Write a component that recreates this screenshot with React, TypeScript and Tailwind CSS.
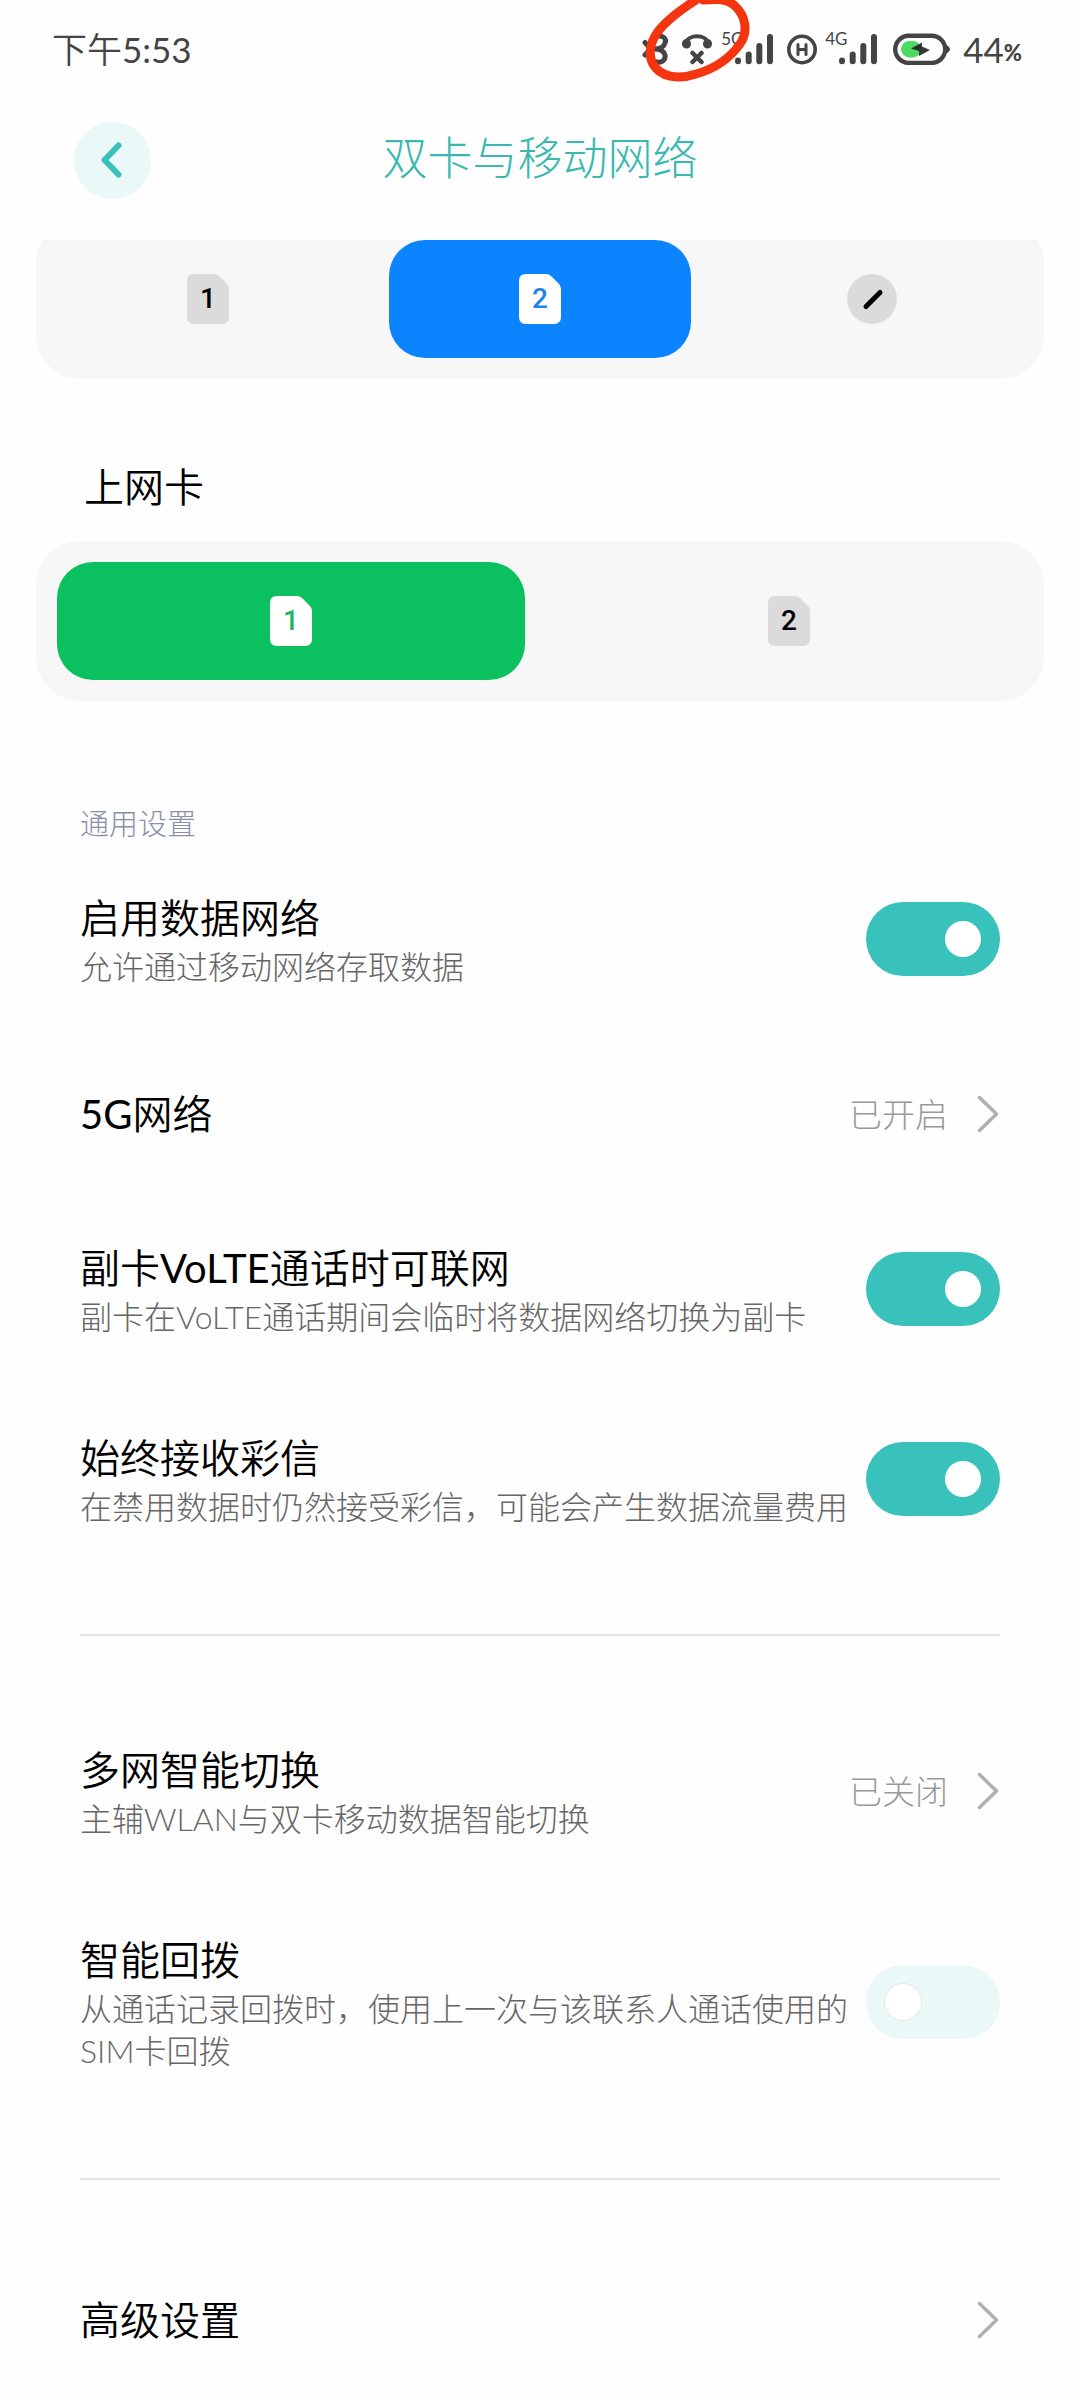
// Import React and the hook for the interactive controls.
import React, { useState } from 'react';
import { clsx } from 'clsx';

// One option inside a segmented selector.
interface Segment {
  id: string;
  label: string;
  icon: React.ReactNode;
}

interface SegmentedProps {
  name: string;
  segments: Segment[];
  value: string;
  onChange: (id: string) => void;
  columns: string;      // Grid columns class.
  activeClass: string;  // Background colour of the selected segment.
}

interface RowProps {
  id: string;
  title: string;
  description?: string;
}

// Slightly heavier than the light body text, used for titles and the clock.
const titleFont = "font-['Lato','Noto_Sans_CJK_SC_DemiLight','Noto_Sans_CJK_SC',sans-serif]";

// Four bars with the network type in the corner.
const Signal: React.FC<{ type: string; className?: string }> = ({ type, className }) => (
  <div className={clsx('relative flex h-8 w-[52px] justify-end', className)}>
    <span className="absolute top-0 left-0 text-[17px] leading-[12px]">{type}</span>
    <svg className="h-8 w-[38px]" viewBox="0 0 38 32" fill="none" stroke="currentColor" strokeWidth="6" strokeLinecap="round">
      <path d="M3 27.5v.8M13.7 21.5v6.8M24.3 13v15.3M35 4v24.3" />
    </svg>
  </div>
);

// The bar at the very top of the phone.
const StatusBar: React.FC = () => (
  <div className="flex h-[98px] items-center justify-between pr-[58px] pl-[52px] text-[#444]">
    <span className={clsx('text-[35px] leading-[40px]', titleFont)}>下午5:53</span>

    <div className="relative flex items-center">
      {/* BLUETOOTH */}
      <svg className="mr-[14px] h-8 w-[26px]" viewBox="0 0 26 32" fill="none" stroke="currentColor" strokeWidth="5" strokeLinecap="round" strokeLinejoin="round">
        <path d="M3 9.500l5 5.500M3 22l5-5.500M12 4c8-3 13 1 11 6-1 4-5 6-11 6 6 0 10 2 11 6 1 6-5 9-11 6" />
      </svg>

      {/* CALL UNAVAILABLE */}
      <svg className="mr-[9px] h-8 w-[30px]" viewBox="0 0 30 32" fill="none" stroke="currentColor" strokeLinecap="round">
        <path d="M4 10C6 1 24 1 26 10" strokeWidth="4" />
        <path d="M4.500 10.500v.5M25.500 10.500v.5" strokeWidth="9" />
        <path d="M10.500 20l9 9M19.500 20l-9 9" strokeWidth="4.500" />
      </svg>

      <Signal type="5G" className="mr-[14px]" />

      {/* HD VOICE */}
      <svg className="mr-2 h-8 w-[30px]" viewBox="0 0 30 32" fill="none" stroke="currentColor" strokeLinecap="round">
        <circle cx="15" cy="16.500" r="13.200" strokeWidth="3.600" />
        <path d="M11 11.500v10M19 11.500v10M11 16.500h8" strokeWidth="3" />
      </svg>

      <Signal type="4G" className="mr-4" />

      {/* BATTERY */}
      <svg className="mr-3 h-8 w-[58px]" viewBox="0 0 58 32">
        <path d="M52 11.500q5 2 5 4.800t-5 4.800z" fill="#444" />
        <rect x="2.200" y="2.700" width="50" height="27.200" rx="13.600" fill="none" stroke="#444" strokeWidth="4.400" />
        <rect x="8" y="8" width="20" height="16.500" rx="8.200" fill="#4cd964" />
        <path d="M18 15.500 29 9.500v4l8 3.500-11 6v-5z" fill="#222" fillOpacity="0.9" />
      </svg>

      <span className="text-[35px] leading-[40px]">44</span>
      <span className="pt-2 text-[22px] leading-[32px] font-black">%</span>

      {/* HAND-DRAWN RING around the call icon. */}
      <svg className="absolute -top-[28px] left-0 h-[84px] w-[110px] overflow-visible" viewBox="0 0 110 84" fill="none" stroke="#f4350f" strokeWidth="9" strokeLinecap="round" strokeLinejoin="round">
        <path d="M54 -1C40 8 24 19 15 32 8 42 6 54 11 63c7 13 25 16 43 10 18-5 34-16 44-30 9-13 5-29-5-38C84-3 73-2 61-1" />
      </svg>
    </div>
  </div>
);

// A SIM card with its slot number. Colours come from the parent segment.
const SimIcon: React.FC<{ slot: number; active: boolean; tint: string }> = ({ slot, active, tint }) => (
  <span className={clsx('relative flex h-[50px] w-[42px] items-center justify-center', active ? tint : 'text-black')}>
    <svg className="absolute inset-0 h-[50px] w-[42px]" viewBox="0 0 42 50">
      <path
        d="M7 0h20q3 0 5 2l8 8q2 2 2 5v28q0 7-7 7H7q-7 0-7-7V7q0-7 7-7z"
        fill={active ? '#fff' : '#dbdbdb'}
      />
    </svg>
    <span className="relative font-[Roboto,sans-serif] text-[28px] leading-[50px] font-medium">{slot}</span>
  </span>
);

// The slash inside a round badge.
const SlashIcon: React.FC = () => (
  <svg className="h-[50px] w-[50px]" viewBox="0 0 50 50">
    <circle cx="25" cy="25" r="25" fill="#dbdbdb" />
    <path d="M19 32.500 33 18.500" stroke="#000" strokeWidth="5" strokeLinecap="round" />
  </svg>
);

// Rounded selector with equally wide options.
const Segmented: React.FC<SegmentedProps> = ({ name, segments, value, onChange, columns, activeClass }) => (
  <div role="group" aria-label={name} className={clsx('mx-9 grid gap-[30px] rounded-[44px] bg-[#f7f7f7] p-[21px]', columns)}>
    {segments.map((segment) => (
      <button
        key={segment.id}
        type="button"
        aria-label={segment.label}
        aria-pressed={segment.id === value}
        onClick={() => onChange(segment.id)}
        className={clsx('flex h-[118px] items-center justify-center rounded-[36px]', segment.id === value && activeClass)}
      >
        {segment.icon}
      </button>
    ))}
  </div>
);

// Title with an optional description under it.
const RowText: React.FC<Omit<RowProps, 'id'>> = ({ title, description }) => (
  <span className="block flex-1 text-left">
    <span className={clsx('block text-[40px] leading-[56px] text-black', titleFont)}>{title}</span>
    {description && (
      <span className="block text-[32px] leading-[42px] font-light text-[#666]">{description}</span>
    )}
  </span>
);

// A row that ends with a switch.
const SwitchRow: React.FC<RowProps & { defaultOn?: boolean }> = ({ id, title, description, defaultOn = false }) => {
  const [on, setOn] = useState(defaultOn);

  return (
    <label htmlFor={id} className="flex items-center gap-4 py-[46px]">
      <RowText title={title} description={description} />
      <input
        id={id}
        type="checkbox"
        role="switch"
        checked={on}
        onChange={() => setOn(!on)}
        className="flex h-[74px] w-[134px] shrink-0 appearance-none items-center rounded-full bg-[#eaf8f7] px-[19px] before:h-9 before:w-9 before:rounded-full before:bg-white before:ring-1 before:ring-[#e4e9e8] before:content-[''] checked:justify-end checked:bg-[#38c2bb] checked:before:ring-0"
      />
    </label>
  );
};

// A row that leads to another page.
const LinkRow: React.FC<RowProps & { value?: string }> = ({ id, title, description, value }) => (
  <button
    id={id}
    type="button"
    className={clsx('flex w-full items-center', description ? 'py-[46px]' : 'py-[52px]')}
  >
    <RowText title={title} description={description} />
    {value && <span className="mr-7 text-[33px] leading-[42px] font-light text-[#999]">{value}</span>}
    <svg className="h-10 w-6" viewBox="0 0 24 40" fill="none" stroke="#b0b0b0" strokeWidth="3.500" strokeLinecap="round" strokeLinejoin="round">
      <path d="M3.500 3.500 20.500 20 3.500 36.500" />
    </svg>
  </button>
);

const Divider: React.FC = () => <hr className="my-[60px] border-t-2 border-[#e2e2e2]" />;

const App: React.FC = () => {
  const [sim, setSim] = useState('sim2');
  const [dataSim, setDataSim] = useState('sim1');

  return (
    <div className="min-h-screen bg-[#fefefe] font-['Lato','Noto_Sans_CJK_SC',sans-serif]">
      <StatusBar />

      {/* HEADER: the spacer on the right keeps the title centred. */}
      <header className="flex h-[142px] items-center justify-between px-[74px] pb-[18px]">
        <button type="button" aria-label="返回" className="flex h-[77px] w-[77px] items-center justify-center rounded-full bg-[#eaf8f8]">
          <svg className="h-9 w-6" viewBox="0 0 24 36" fill="none" stroke="#3dbfb9" strokeWidth="6" strokeLinecap="round" strokeLinejoin="round">
            <path d="M17.500 3.500 3.500 18l14 14.500" />
          </svg>
        </button>
        <h1 className="pb-1 text-[45px] leading-[56px] font-light text-[#38b8b0]">双卡与移动网络</h1>
        <div className="w-[77px]" />
      </header>

      {/* CONTENT: scrolled a little, so the first selector is cut at the top. */}
      <main className="overflow-hidden">
        <div className="-mt-[21px]">
          <Segmented
            name="默认拨号卡"
            value={sim}
            onChange={setSim}
            columns="grid-cols-3"
            activeClass="bg-[#0d84ff]"
            segments={[
              { id: 'sim1', label: 'SIM 1', icon: <SimIcon slot={1} active={sim === 'sim1'} tint="text-[#1b84ee]" /> },
              { id: 'sim2', label: 'SIM 2', icon: <SimIcon slot={2} active={sim === 'sim2'} tint="text-[#1b84ee]" /> },
              { id: 'none', label: '未设置', icon: <SlashIcon /> },
            ]}
          />
        </div>

        <h2 className={clsx('mt-20 mb-[26px] px-[84px] text-[40px] leading-[56px] text-black', titleFont)}>上网卡</h2>
        <Segmented
          name="上网卡"
          value={dataSim}
          onChange={setDataSim}
          columns="grid-cols-2"
          activeClass="bg-[#0bc15f]"
          segments={[
            { id: 'sim1', label: 'SIM 1', icon: <SimIcon slot={1} active={dataSim === 'sim1'} tint="text-[#1fb566]" /> },
            { id: 'sim2', label: 'SIM 2', icon: <SimIcon slot={2} active={dataSim === 'sim2'} tint="text-[#1fb566]" /> },
          ]}
        />

        {/* GENERAL SETTINGS */}
        <section className="px-20 pt-[103px]">
          <h3 className="text-[29px] leading-[40px] font-light text-[#8a8fa8]">通用设置</h3>
          <SwitchRow id="data" title="启用数据网络" description="允许通过移动网络存取数据" defaultOn />
          <LinkRow id="five-g" title="5G网络" value="已开启" />
          <SwitchRow id="volte" title="副卡VoLTE通话时可联网" description="副卡在VoLTE通话期间会临时将数据网络切换为副卡" defaultOn />
          <SwitchRow id="mms" title="始终接收彩信" description="在禁用数据时仍然接受彩信，可能会产生数据流量费用" defaultOn />
          <Divider />
          <LinkRow id="multi" title="多网智能切换" description="主辅WLAN与双卡移动数据智能切换" value="已关闭" />
          <SwitchRow id="redial" title="智能回拨" description="从通话记录回拨时，使用上一次与该联系人通话使用的SIM卡回拨" />
          <Divider />
          <LinkRow id="advanced" title="高级设置" />
        </section>
      </main>
    </div>
  );
};

export default App;
